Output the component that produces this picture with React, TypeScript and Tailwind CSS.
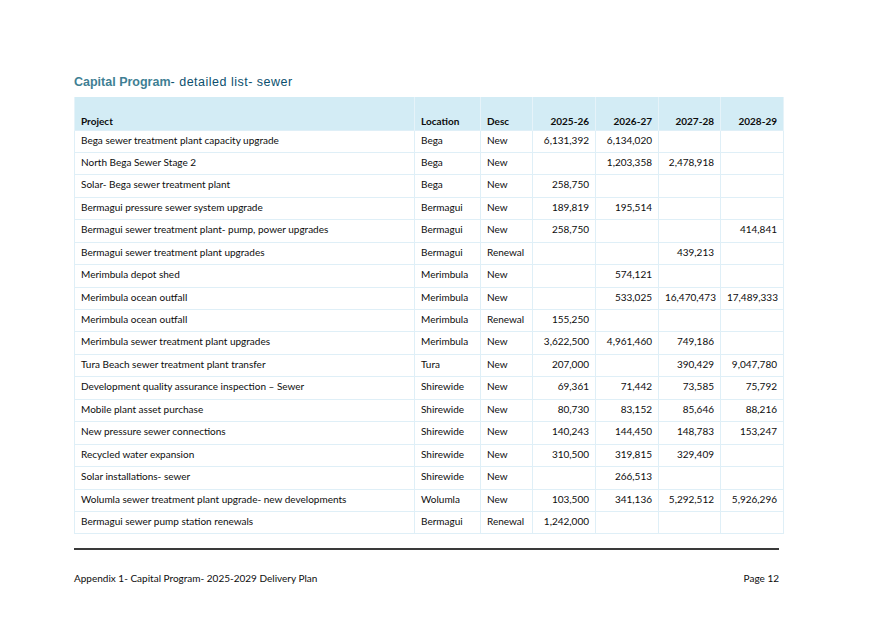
const rows: [string, string, string, string, string, string, string][] = [
  ["Bega sewer treatment plant capacity upgrade", "Bega", "New", "6,131,392", "6,134,020", "", ""],
  ["North Bega Sewer Stage 2", "Bega", "New", "", "1,203,358", "2,478,918", ""],
  ["Solar- Bega sewer treatment plant", "Bega", "New", "258,750", "", "", ""],
  ["Bermagui pressure sewer system upgrade", "Bermagui", "New", "189,819", "195,514", "", ""],
  ["Bermagui sewer treatment plant- pump, power upgrades", "Bermagui", "New", "258,750", "", "", "414,841"],
  ["Bermagui sewer treatment plant upgrades", "Bermagui", "Renewal", "", "", "439,213", ""],
  ["Merimbula depot shed", "Merimbula", "New", "", "574,121", "", ""],
  ["Merimbula ocean outfall", "Merimbula", "New", "", "533,025", "16,470,473", "17,489,333"],
  ["Merimbula ocean outfall", "Merimbula", "Renewal", "155,250", "", "", ""],
  ["Merimbula sewer treatment plant upgrades", "Merimbula", "New", "3,622,500", "4,961,460", "749,186", ""],
  ["Tura Beach sewer treatment plant transfer", "Tura", "New", "207,000", "", "390,429", "9,047,780"],
  ["Development quality assurance inspection – Sewer", "Shirewide", "New", "69,361", "71,442", "73,585", "75,792"],
  ["Mobile plant asset purchase", "Shirewide", "New", "80,730", "83,152", "85,646", "88,216"],
  ["New pressure sewer connections", "Shirewide", "New", "140,243", "144,450", "148,783", "153,247"],
  ["Recycled water expansion", "Shirewide", "New", "310,500", "319,815", "329,409", ""],
  ["Solar installations- sewer", "Shirewide", "New", "", "266,513", "", ""],
  ["Wolumla sewer treatment plant upgrade- new developments", "Wolumla", "New", "103,500", "341,136", "5,292,512", "5,926,296"],
  ["Bermagui sewer pump station renewals", "Bermagui", "Renewal", "1,242,000", "", "", ""],
];

const widths = ["w-[340px]", "w-[66px]", "w-[52px]", "w-[63px]", "w-[63px]", "w-[62px]", "w-[63px]"];
const heads = ["Project", "Location", "Desc", "2025-26", "2026-27", "2027-28", "2028-29"];

export default function App() {
  return (
    <div className="w-[876px] h-[620px] bg-white font-['Lato',sans-serif] text-[#0d0d0d]">
      <div className="pl-[74px] pt-[74px] w-[783px]">
        <h1 className="font-['Liberation_Sans',sans-serif] text-[12.5px] leading-[16px]">
          <span className="font-bold text-[#3f7f94]">Capital Program</span>
          <span className="text-[#0b4f6e] tracking-[0.5px]">- detailed list- sewer</span>
        </h1>
        <table className="mt-[7px] w-[709px] table-fixed border-collapse text-[10px]">
          <thead>
            <tr className="bg-[#d3ecf5] h-[33px]">
              {heads.map((h, i) => (
                <th
                  key={h}
                  className={`${widths[i]} border-x border-[#e6f3f9] px-[6px] pb-[1px] align-bottom font-bold ${i > 2 ? "text-right" : "text-left"}`}
                >
                  {h}
                </th>
              ))}
            </tr>
          </thead>
          <tbody>
            {rows.map((r, ri) => (
              <tr key={ri} className="h-[22.45px]">
                {r.map((c, i) => (
                  <td
                    key={i}
                    className={`border border-[#dfeff7] px-[6px] pt-[3px] align-top leading-[13px] ${i > 2 ? "text-right" : "text-left"}`}
                  >
                    {c}
                  </td>
                ))}
              </tr>
            ))}
          </tbody>
        </table>
        <div className="mt-[14px] w-[705px] h-[2px] bg-[#3a3a3a]" />
        <div className="mt-[21px] w-[705px] flex justify-between text-[10px]">
          <span>Appendix 1- Capital Program- 2025-2029 Delivery Plan</span>
          <span>Page 12</span>
        </div>
      </div>
    </div>
  );
}
